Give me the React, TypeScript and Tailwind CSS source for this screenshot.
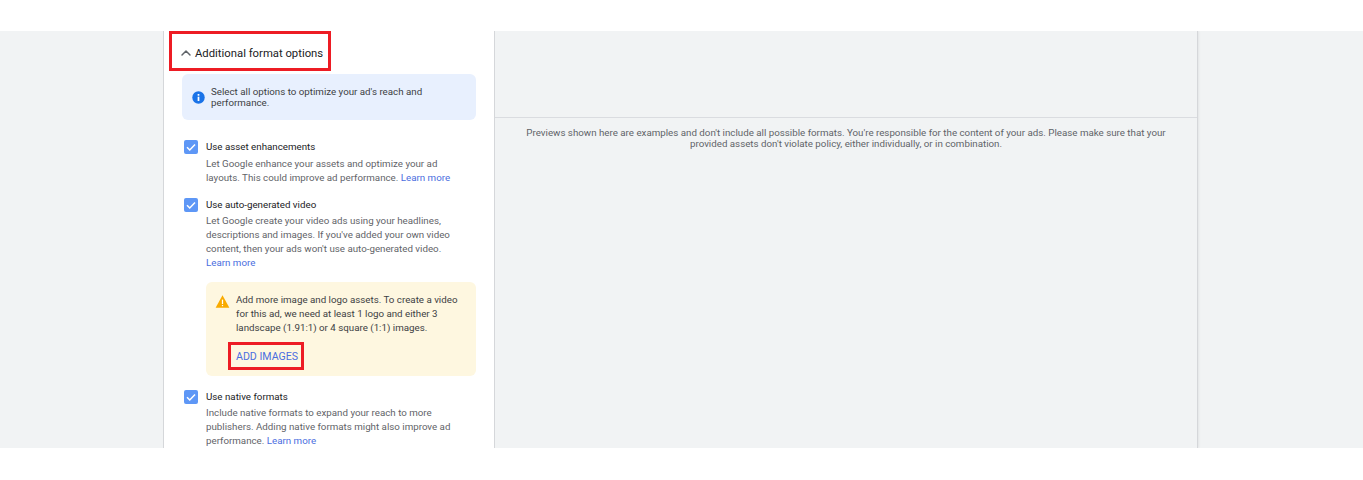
import { ChevronUp } from "lucide-react";

function CheckBox() {
  return (
    <div className="w-[14px] h-[14px] rounded-[2px] bg-[#5e97f6] flex items-center justify-center shrink-0">
      <svg width="12" height="12" viewBox="0 0 24 24" fill="none" stroke="#fff" strokeWidth="3">
        <path d="M4 12.5l5.5 5.5L20 7" />
      </svg>
    </div>
  );
}

function LearnMore() {
  return <span className="text-[#4a6ee0]">Learn more</span>;
}

function Option({
  title,
  tight,
  children,
}: {
  title: string;
  tight?: boolean;
  children: React.ReactNode;
}) {
  return (
    <div className="flex gap-[8px] pl-[20px]">
      <div className="pt-[1px]">
        <CheckBox />
      </div>
      <div>
        <div className="text-[#202124] h-[16px] leading-[16px]">{title}</div>
        <div className={`text-[#5f6368] leading-[14px] ${tight ? "mt-[1px]" : "mt-[2px]"}`}>{children}</div>
      </div>
    </div>
  );
}

export default function App() {
  return (
    <div className="h-[480px] bg-white font-['Roboto',sans-serif] text-[9.75px] overflow-hidden">
      <div className="h-[31px]" />
      <div className="h-[417px] bg-[#f1f3f4] overflow-hidden flex pl-[163px]">
        {/* Left settings panel */}
        <div className="w-[332px] h-full bg-white border-x border-[#d5d7da] shrink-0 relative">
          <div className="h-[43px] flex items-center pl-[14px] gap-[1px] pt-[3px] text-[#202124] text-[11.3px]">
            <ChevronUp size={16} strokeWidth={2.2} className="text-[#5f6368] mb-[3px]" />
            <span>Additional format options</span>
          </div>
          <div className="ml-[18px] w-[294px] h-[46px] bg-[#e8f0fe] rounded-[6px] flex items-center gap-[6px] pl-[10px] text-[#3c4043] leading-[11px]">
            <svg width="13" height="13" viewBox="0 0 24 24" className="shrink-0">
              <circle cx="12" cy="12" r="11.5" fill="#1a73e8" />
              <rect x="10.4" y="10.5" width="3.2" height="8" fill="#fff" />
              <rect x="10.4" y="5.5" width="3.2" height="3.2" fill="#fff" />
            </svg>
            <div className="w-[250px]">Select all options to optimize your ad's reach and performance.</div>
          </div>

          <div className="mt-[19px]">
            <Option title="Use asset enhancements">
              Let Google enhance your assets and optimize your ad
              <br />
              layouts. This could improve ad performance. <LearnMore />
            </Option>
          </div>

          <div className="mt-[12px]">
            <Option title="Use auto-generated video" tight>
              Let Google create your video ads using your headlines,
              <br />
              descriptions and images. If you've added your own video
              <br />
              content, then your ads won't use auto-generated video.
              <br />
              <LearnMore />
            </Option>
          </div>

          <div className="ml-[42px] mt-[12px] w-[270px] h-[94px] bg-[#fef7e0] rounded-[6px] flex gap-[6px] pl-[9px] pt-[11px]">
            <svg width="15" height="15" viewBox="0 0 24 24" className="shrink-0 mt-[1px]">
              <path d="M1 22L12 2l11 20z" fill="#f9ab00" />
              <rect x="11" y="9" width="2" height="7" fill="#fff" />
              <rect x="11" y="17.5" width="2" height="2" fill="#fff" />
            </svg>
            <div>
              <div className="text-[#3c4043] leading-[14px]">
                Add more image and logo assets. To create a video
                <br />
                for this ad, we need at least 1 logo and either 3
                <br />
                landscape (1.91:1) or 4 square (1:1) images.
              </div>
              <div className="text-[#4a6ee0] mt-[15px] text-[10.6px] leading-[14px]">ADD IMAGES</div>
            </div>
          </div>

          <div className="mt-[13px]">
            <Option title="Use native formats" tight>
              Include native formats to expand your reach to more
              <br />
              publishers. Adding native formats might also improve ad
              <br />
              performance. <LearnMore />
            </Option>
          </div>

          {/* Red annotation boxes */}
          <div className="absolute left-[5px] top-0 w-[162px] h-[40px] border-[3px] border-[#ed1c24]" />
          <div className="absolute left-[64px] top-[311px] w-[76px] h-[28px] border-[3px] border-[#ed1c24]" />
        </div>

        {/* Preview panel */}
        <div className="w-[703px] h-full border-r border-[#d5d7da] shadow-[1px_0_2px_rgba(0,0,0,0.06)] shrink-0">
          <div className="h-[87px] border-b border-[#dadce0]" />
          <div className="pt-[9px] px-[24px] text-center text-[#5f6368] leading-[11px]">
            Previews shown here are examples and don't include all possible formats. You're responsible for the content of your ads. Please make sure that your
            <br />
            provided assets don't violate policy, either individually, or in combination.
          </div>
        </div>
      </div>
    </div>
  );
}
